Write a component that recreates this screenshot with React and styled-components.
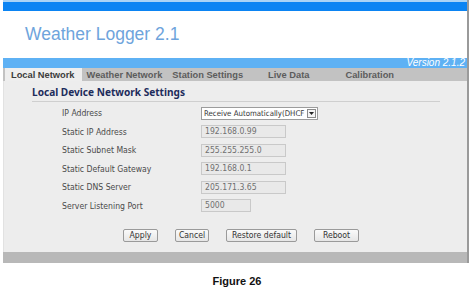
import React from "react";
import styled, { createGlobalStyle } from "styled-components";

const Global = createGlobalStyle`
  html, body { margin: 0; padding: 0; background: #ffffff; }
  body { width: 474px; height: 290px; overflow: hidden; font-family: "Liberation Sans", Arial, sans-serif; }
`;

const formFont = `"DejaVu Sans Condensed", "Noto Sans", sans-serif`;

const Frame = styled.div`
  margin-left: 3px;
  width: 464px;
  border-right: 2px solid #9a9a9a;
  display: flex;
  flex-direction: column;
`;

const TopBar = styled.div`
  height: 9px;
  background: #0b84f3;
  border-top: 2px solid #a9d3f6;
`;

const Header = styled.div`
  height: 47px;
  background: #ffffff;
  display: flex;
  align-items: center;
  padding-left: 22px;
`;

const Title = styled.h1`
  margin: 0;
  font-family: "Liberation Sans", Arial, sans-serif;
  font-weight: normal;
  font-size: 17.5px;
  color: #6ea4dc;
`;

const VersionBar = styled.div`
  height: 10px;
  background: #5eb1f4;
  display: flex;
  align-items: center;
  justify-content: flex-end;
  padding-right: 2px;
`;

const Version = styled.span`
  font-family: "Liberation Sans", Arial, sans-serif;
  font-style: italic;
  font-size: 10px;
  line-height: 10px;
  color: #ffffff;
`;

const Tabs = styled.div`
  height: 13px;
  background: #c2c2c2;
  display: flex;
  align-items: stretch;
  padding-left: 2px;
`;

const Tab = styled.div`
  display: flex;
  align-items: center;
  padding: 0 ${(p) => p.$pr}px 0 ${(p) => p.$pl}px;
  background: ${(p) => (p.$active ? "#eeeeee" : "transparent")};
  font-family: "Liberation Sans", Arial, sans-serif;
  font-weight: bold;
  font-size: 9.3px;
  color: ${(p) => (p.$active ? "#3c3c3c" : "#5c5c5c")};
  white-space: nowrap;
`;

const Content = styled.div`
  height: 171px;
  background: #ededed;
  border-left: 1px solid #e2e2e2;
  padding: 5px 0 0 28px;
  box-sizing: border-box;
  font-family: ${formFont};
`;

const Heading = styled.h2`
  margin: 0;
  width: 408px;
  font-family: "Noto Sans", "DejaVu Sans", sans-serif;
  font-weight: bold;
  font-size: 10.1px;
  line-height: 13px;
  color: #1d2c5c;
  padding-bottom: 2px;
  border-bottom: 1px solid #cfcfcf;
`;

const Form = styled.div`
  display: grid;
  grid-template-columns: 139px auto;
  grid-auto-rows: 18.5px;
  align-items: center;
  margin-top: 2px;
  padding-left: 30px;
`;

const Label = styled.div`
  font-family: ${formFont};
  font-size: 8.6px;
  color: #4a4a4a;
  white-space: nowrap;
`;

const Field = styled.div`
  width: ${(p) => p.$w}px;
  height: 13px;
  box-sizing: border-box;
  border: 1px solid #c9c9c9;
  background: #e9e9e9;
  font-family: ${formFont};
  font-size: 8.6px;
  line-height: 11px;
  color: #707070;
  padding-left: 3px;
  white-space: nowrap;
  overflow: hidden;
`;

const Select = styled.div`
  width: 117px;
  height: 13px;
  box-sizing: border-box;
  border: 1px solid #9c9c9c;
  background: #ffffff;
  display: flex;
  align-items: center;
  gap: 1px;
  padding: 0 1px 0 2px;
  font-family: ${formFont};
  font-size: 7.8px;
  color: #333333;
`;

const SelectText = styled.span`
  flex: 1;
  min-width: 0;
  white-space: nowrap;
  line-height: 11px;
`;

const Arrow = styled.span`
  width: 9px;
  height: 9px;
  box-sizing: border-box;
  border: 1px solid #8a8a8a;
  background: #f4f4f4;
  display: flex;
  align-items: center;
  justify-content: center;
  flex-shrink: 0;
`;

const Buttons = styled.div`
  display: flex;
  gap: 17px;
  margin-top: 14px;
  padding-left: 91px;
`;

const Button = styled.button`
  width: ${(p) => p.$w}px;
  height: 13px;
  padding: 0;
  box-sizing: border-box;
  border: 1px solid #9a9a9a;
  border-radius: 2px;
  background: linear-gradient(#fafafa, #e6e6e6);
  font-family: ${formFont};
  font-size: 8.6px;
  line-height: 11px;
  color: #333333;
`;

const FooterBar = styled.div`
  height: 11px;
  background: #b8b8b8;
`;

const Caption = styled.div`
  text-align: center;
  margin-top: 12px;
  font-family: "Liberation Sans", Arial, sans-serif;
  font-weight: bold;
  font-size: 11px;
  color: #111111;
`;

const rows = [
  ["Static IP Address", "192.168.0.99", 85],
  ["Static Subnet Mask", "255.255.255.0", 85],
  ["Static Default Gateway", "192.168.0.1", 85],
  ["Static DNS Server", "205.171.3.65", 85],
  ["Server Listening Port", "5000", 50],
];

export default function App() {
  return (
    <>
      <Global />
      <Frame>
        <TopBar />
        <Header>
          <Title>Weather Logger 2.1</Title>
        </Header>
        <VersionBar>
          <Version>Version 2.1.2</Version>
        </VersionBar>
        <Tabs>
          <Tab $active $pl={6} $pr={7}>Local Network</Tab>
          <Tab $pl={5} $pr={10}>Weather Network</Tab>
          <Tab $pl={0} $pr={25}>Station Settings</Tab>
          <Tab $pl={0} $pr={36}>Live Data</Tab>
          <Tab $pl={0} $pr={0}>Calibration</Tab>
        </Tabs>
        <Content>
          <Heading>Local Device Network Settings</Heading>
          <Form>
            <Label>IP Address</Label>
            <Select>
              <SelectText>Receive Automatically(DHCF</SelectText>
              <Arrow>
                <svg width="5" height="3" viewBox="0 0 5 3">
                  <path d="M0 0 L5 0 L2.5 3 Z" fill="#222" />
                </svg>
              </Arrow>
            </Select>
            {rows.map(([l, v, w]) => (
              <React.Fragment key={l}>
                <Label>{l}</Label>
                <Field $w={w}>{v}</Field>
              </React.Fragment>
            ))}
          </Form>
          <Buttons>
            <Button $w={35}>Apply</Button>
            <Button $w={34}>Cancel</Button>
            <Button $w={71}>Restore default</Button>
            <Button $w={45}>Reboot</Button>
          </Buttons>
        </Content>
        <FooterBar />
      </Frame>
      <Caption>Figure 26</Caption>
    </>
  );
}
